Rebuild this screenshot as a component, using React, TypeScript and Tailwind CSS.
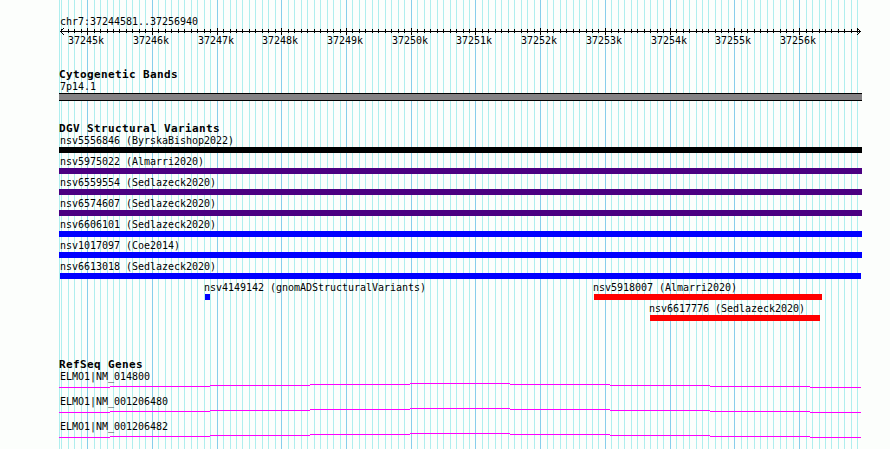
import type { ReactNode } from "react";

const START = 37244581;
const END = 37256940;
const LEFT = 60;
const PX_PER_BP = 800 / (END - START + 1);

const toX = (pos: number) => Math.round(LEFT + (pos - START) * PX_PER_BP);

const TICKS = Array.from({ length: 124 }, (_, i) => {
  const pos = 37244600 + i * 100;
  return { pos, x: toX(pos), major: pos % 1000 === 0 };
});

type Variant = { label: string; start: string; bar: string };

const VARIANTS: Variant[][] = [
  [{ label: "nsv5556846 (ByrskaBishop2022)", start: "ml-[59px]", bar: "w-[803px] bg-black" }],
  [{ label: "nsv5975022 (Almarri2020)", start: "ml-[59px]", bar: "w-[803px] bg-[#4b0082]" }],
  [{ label: "nsv6559554 (Sedlazeck2020)", start: "ml-[59px]", bar: "w-[803px] bg-[#4b0082]" }],
  [{ label: "nsv6574607 (Sedlazeck2020)", start: "ml-[59px]", bar: "w-[803px] bg-[#4b0082]" }],
  [{ label: "nsv6606101 (Sedlazeck2020)", start: "ml-[59px]", bar: "w-[803px] bg-[#0000ff]" }],
  [{ label: "nsv1017097 (Coe2014)", start: "ml-[59px]", bar: "w-[803px] bg-[#0000ff]" }],
  [{ label: "nsv6613018 (Sedlazeck2020)", start: "ml-[59px]", bar: "ml-px w-[801px] bg-[#0000ff]" }],
  [
    { label: "nsv4149142 (gnomADStructuralVariants)", start: "ml-[203px] w-[389px]", bar: "ml-0.5 w-[5px] bg-[#0000ff]" },
    { label: "nsv5918007 (Almarri2020)", start: "", bar: "ml-0.5 w-[228px] bg-[#ff0000]" },
  ],
  [{ label: "nsv6617776 (Sedlazeck2020)", start: "ml-[648px]", bar: "ml-0.5 w-[170px] bg-[#ff0000]" }],
];

const GENES = ["ELMO1|NM_014800", "ELMO1|NM_001206480", "ELMO1|NM_001206482"];

// y offset of the intron line for every 100px segment
const INTRON = [5, 4, 3, 2, 1, 2, 3, 4, 5];

const Grid = () => (
  <svg className="absolute inset-0" width="890" height="449" shapeRendering="crispEdges">
    <rect x="59" y="0" width="1" height="449" fill="#afeeee" />
    {TICKS.map((t) => (
      <rect key={t.pos} x={t.x} y="0" width="1" height="449" fill={t.major ? "#87ceeb" : "#afeeee"} />
    ))}
  </svg>
);

const Ruler = () => (
  <svg className="block" width="890" height="20">
    <g shapeRendering="crispEdges">
      <rect x="60" y="4" width="801" height="1" />
      {TICKS.map((t) => (
        <rect key={t.pos} x={t.x} y={t.major ? 1 : 2} width="1" height={t.major ? 7 : 4} />
      ))}
      {[1, 2, 3].map((d) => (
        <g key={d}>
          <rect x={60 + d} y={4 - d} width="1" height="1" />
          <rect x={60 + d} y={4 + d} width="1" height="1" />
          <rect x={860 - d} y={4 - d} width="1" height="1" />
          <rect x={860 - d} y={4 + d} width="1" height="1" />
        </g>
      ))}
    </g>
    {TICKS.filter((t) => t.major).map((t) => (
      <text key={t.pos} x={t.x - 19} y="17">
        {t.pos / 1000}k
      </text>
    ))}
  </svg>
);

const Title = ({ children }: { children: ReactNode }) => (
  <h2 className="ml-[59px] h-3 text-[11px] leading-[13px] font-bold tracking-[0.378px]">{children}</h2>
);

const Label = ({ children }: { children: ReactNode }) => (
  <div className="ml-px h-3 leading-[13px]">{children}</div>
);

const Intron = () => (
  <svg className="block" width="890" height="13" shapeRendering="crispEdges">
    {INTRON.map((y, i) => {
      const x = i === 0 ? 59 : 10 + i * 100;
      const end = i === 8 ? 861 : 110 + i * 100;
      return <rect key={i} x={x} y={y} width={end - x} height="1" fill="#ff00ff" />;
    })}
  </svg>
);

export default function App() {
  return (
    <main className="relative h-[449px] w-[890px] overflow-hidden bg-[#fcfefc] font-['DejaVu_Sans_Mono',monospace] text-[10px] tracking-[-0.02px] whitespace-pre text-black">
      <Grid />
      <div className="relative pt-[15px]">
        <section className="h-[53px]">
          <div className="ml-[60px] h-3 leading-[13px]">chr7:37244581..37256940</div>
          <Ruler />
        </section>

        <section className="h-[54px]">
          <Title>Cytogenetic Bands</Title>
          <div className="ml-[59px]">
            <Label>7p14.1</Label>
            <div className="mt-px h-2 w-[803px] border-y border-black bg-[#848284]" />
          </div>
        </section>

        <section className="h-[236px]">
          <Title>DGV Structural Variants</Title>
          {VARIANTS.map((row, i) => (
            <div key={i} className="flex h-[21px]">
              {row.map((v) => (
                <div key={v.label} className={v.start}>
                  <Label>{v.label}</Label>
                  <div className={`mt-px h-1.5 ${v.bar}`} />
                </div>
              ))}
            </div>
          ))}
        </section>

        <section>
          <Title>RefSeq Genes</Title>
          {GENES.map((gene) => (
            <div key={gene} className="h-[25px]">
              <div className="ml-[59px]">
                <Label>{gene}</Label>
              </div>
              <Intron />
            </div>
          ))}
        </section>
      </div>
    </main>
  );
}
